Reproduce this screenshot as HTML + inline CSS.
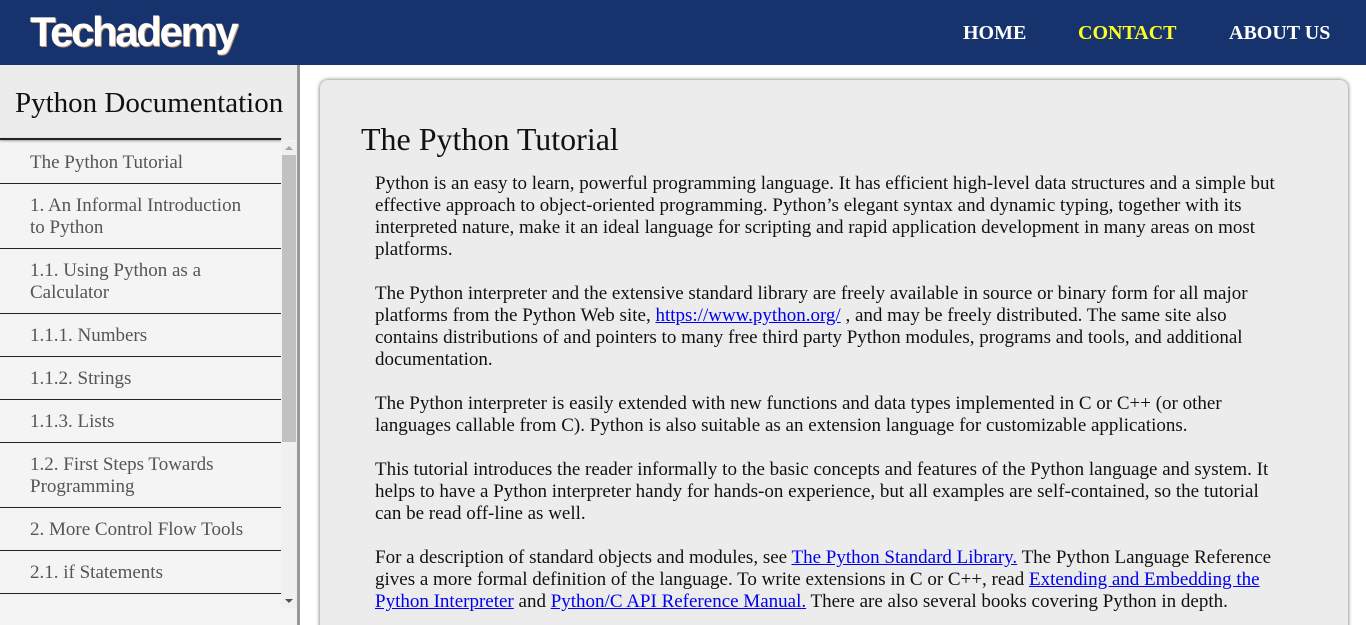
<!DOCTYPE html>
<html><head><meta charset="utf-8"><style>
*{margin:0;padding:0;box-sizing:border-box}
html,body{width:1366px;height:625px;overflow:hidden}
body{background:#fff;font-family:"Liberation Serif",serif;position:relative}
.hd{position:absolute;left:0;top:0;width:1366px;height:65px;background:#17336e}
.logo{position:absolute;left:30px;top:8px;font-family:"Liberation Sans",sans-serif;font-weight:bold;font-size:42px;color:#fff;letter-spacing:-2.4px;text-shadow:1px 1px 0 #c8a070}
.nav{position:absolute;top:22px;font-weight:bold;font-size:20px;color:#fff}
.side{position:absolute;left:0;top:65px;width:300px;height:560px;background:#f4f4f4;border-right:3px solid #999}
.sh{height:75px;background:#ececec;font-size:29px;color:#111;position:relative}
.sh span{position:absolute;left:15px;top:22px;white-space:nowrap}
.sh i{position:absolute;left:0;bottom:0;width:281px;height:2px;background:#222;box-shadow:0 1px 2px rgba(0,0,0,.4)}
.list{position:absolute;left:0;top:76px;width:281px}
.it{border-bottom:1px solid #222;padding:11px 30px 9px;font-size:19px;line-height:22px;color:#555}
.sb{position:absolute;left:281px;top:76px;width:16px;height:467px;background:#f0f0f0}
.th{position:absolute;left:1px;top:14px;width:14px;height:287px;background:#c1c1c1}
.ar{position:absolute;left:4px;width:0;height:0;border-left:4px solid transparent;border-right:4px solid transparent}
.main{position:absolute;left:320px;top:80px;width:1028px;height:560px;background:#ececec;border-radius:8px;box-shadow:0 0 4px rgba(0,0,0,.6)}
h1{position:absolute;left:41px;top:41px;font-weight:normal;font-size:32px;color:#111}
.tx{position:absolute;left:55px;top:93px;width:908px;font-size:19px;line-height:22px;color:#111}
.tx p{margin-bottom:22px}
a{color:#00e}
</style></head><body>
<div class="hd"><div class="logo">Techademy</div>
<div class="nav" style="left:963px">HOME</div>
<div class="nav" style="left:1078px;color:#ffff22">CONTACT</div>
<div class="nav" style="left:1229px">ABOUT US</div></div>
<div class="side"><div class="sh"><span>Python Documentation</span><i></i></div>
<div class="list">
<div class="it">The Python Tutorial</div>
<div class="it">1. An Informal Introduction to Python</div>
<div class="it">1.1. Using Python as a Calculator</div>
<div class="it">1.1.1. Numbers</div>
<div class="it">1.1.2. Strings</div>
<div class="it">1.1.3. Lists</div>
<div class="it">1.2. First Steps Towards Programming</div>
<div class="it">2. More Control Flow Tools</div>
<div class="it">2.1. if Statements</div>
</div>
<div class="sb"><div class="ar" style="top:5px;border-bottom:4px solid #a3a3a3"></div><div class="th"></div><div class="ar" style="bottom:5px;border-top:4px solid #505050"></div></div>
</div>
<div class="main"><h1>The Python Tutorial</h1>
<div class="tx">
<p>Python is an easy to learn, powerful programming language. It has efficient high-level data structures and a simple but effective approach to object-oriented programming. Python’s elegant syntax and dynamic typing, together with its interpreted nature, make it an ideal language for scripting and rapid application development in many areas on most platforms.</p>
<p>The Python interpreter and the extensive standard library are freely available in source or binary form for all major platforms from the Python Web site, <a href="#">https://www.python.org/</a> , and may be freely distributed. The same site also contains distributions of and pointers to many free third party Python modules, programs and tools, and additional documentation.</p>
<p>The Python interpreter is easily extended with new functions and data types implemented in C or C++ (or other languages callable from C). Python is also suitable as an extension language for customizable applications.</p>
<p>This tutorial introduces the reader informally to the basic concepts and features of the Python language and system. It helps to have a Python interpreter handy for hands-on experience, but all examples are self-contained, so the tutorial can be read off-line as well.</p>
<p>For a description of standard objects and modules, see <a href="#">The Python Standard Library.</a> The Python Language Reference gives a more formal definition of the language. To write extensions in C or C++, read <a href="#">Extending and Embedding the Python Interpreter</a> and <a href="#">Python/C API Reference Manual.</a> There are also several books covering Python in depth.</p>
</div></div>
</body></html>
